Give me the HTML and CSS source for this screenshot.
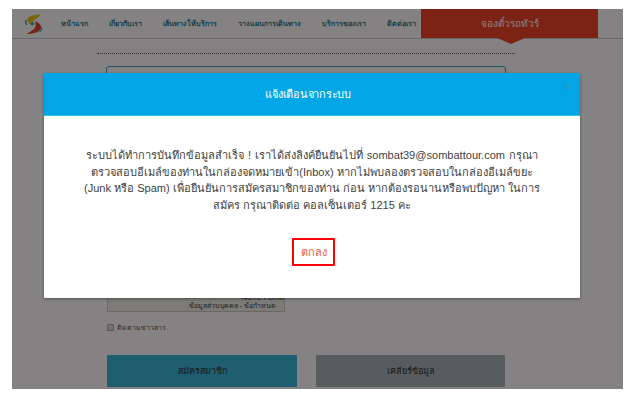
FILE: index.html
```html
<!DOCTYPE html>
<html lang="th">
<head>
  <meta charset="UTF-8" />
  <title>สมัครสมาชิก | Sombat Tour</title>
  <link rel="stylesheet" href="styles.css">
</head>
<body>
  <div class="page">
    <header class="site-header">
      <svg class="logo" width="18" height="21" viewBox="0 0 18 21">
        <path d="M16 0 C9 1 2 2 2 6 C2 9 6 10 8 13 C8 10 7 8 9 6 C11 5 14 3 16 0Z" fill="#e8cb1e"/>
        <path d="M2 20 C8 20 16 18 16 13 C16 10 12 8 10 7 C11 10 11 13 9 15 C7 17 4 18 2 20Z" fill="#d9472b"/>
        <circle cx="7.5" cy="9.5" r="1.6" fill="#2a9fd0"/>
        <path d="M1 6 Q0 9 2 11 M16.5 13 Q17 16 14.5 18" stroke="#2a9fd0" stroke-width="1.3" fill="none"/>
      </svg>
      <nav class="nav-links">
        <a class="nav-link">หน้าแรก</a>
        <a class="nav-link">เกี่ยวกับเรา</a>
        <a class="nav-link">เส้นทางให้บริการ</a>
        <a class="nav-link">วางแผนการเดินทาง</a>
        <a class="nav-link">บริการของเรา</a>
        <a class="nav-link">ติดต่อเรา</a>
      </nav>
      <a class="book-tab">จองตั๋วรถทัวร์</a>
    </header>

    <main class="form-area">
      <div class="dash-line"></div>
      <div class="input-box"></div>
      <div class="terms-box">
        <span class="terms-top">NOTE FORM</span>
        <span>ข้อมูลส่วนบุคคล - ข้อกำหนด</span>
      </div>
      <label class="news-check"><span class="check"></span>ติดตามข่าวสาร</label>
      <div class="form-buttons">
        <button class="btn btn-submit">สมัครสมาชิก</button>
        <button class="btn btn-clear">เคลียร์ข้อมูล</button>
      </div>
    </main>

    <div class="overlay"></div>
    <section class="modal">
      <div class="modal-header">
        <h2 class="modal-title">แจ้งเตือนจากระบบ</h2>
        <span class="modal-close">×</span>
      </div>
      <div class="modal-body">
        <p class="modal-text"><span class="first-line">ระบบได้ทำการบันทึกข้อมูลสำเร็จ ! เราได้ส่งลิงค์ยืนยันไปที่ sombat39@sombattour.com กรุณา</span><br>ตรวจสอบอีเมล์ของท่านในกล่องจดหมายเข้า(Inbox) หากไม่พบลองตรวจสอบในกล่องอีเมล์ขยะ<br>(Junk หรือ Spam) เพื่อยืนยันการสมัครสมาชิกของท่าน ก่อน หากต้องรอนานหรือพบปัญหา ในการ<br>สมัคร กรุณาติดต่อ คอลเซ็นเตอร์ 1215 คะ</p>
        <button class="ok-btn">ตกลง</button>
      </div>
    </section>
  </div>
</body>
</html>
```

FILE: styles.css
```css
* { box-sizing: border-box; margin: 0; padding: 0; }
body {
  background: #fff; margin: 9px 11px 11px 12px;
  font-family: 'Liberation Sans', 'DejaVu Sans', sans-serif;
}
.page {
  position: relative; height: 380px; overflow: hidden;
  background: #fff;
}
.site-header {
  display: flex; align-items: stretch; height: 30px;
  border-bottom: 1px solid #ccc; background: #fff;
  padding-left: 13px;
}
.logo { margin-top: 5px; flex: none; }
.nav-links {
  display: flex; gap: 21px; margin-left: 18px; width: 360px;
  white-space: nowrap;
}
.nav-link {
  color: #2b7f95; font-size: 7.2px; font-weight: 700; line-height: 30px;
}
.book-tab {
  position: relative; width: 177px; height: 29px;
  background: #f0462a; color: #fff; font-size: 10px;
  line-height: 29px; text-align: center;
}
.book-tab::after {
  content: ""; position: absolute; left: 76px; top: 29px;
  border: 14px solid transparent; border-top: 6px solid #f0462a; border-bottom: 0;
}
.form-area { padding: 14px 108px 0 85px; }
.dash-line { border-top: 1px dotted #555; }
.input-box {
  margin: 12px 9px 0; height: 40px;
  border: 1px solid #3ba4c4; border-radius: 3px;
}
.terms-box {
  margin: 166px 0 0 10px; width: 178px; height: 40px;
  background: #eef2ea; border: 1px solid #ccc;
  display: flex; flex-direction: column; align-items: flex-end; justify-content: flex-end;
  padding: 0 8px 1px 0;
  color: #444; font-size: 7px; line-height: 9px;
}
.terms-top { margin: 0 -8px -1px 0; }
.news-check {
  display: flex; align-items: center; gap: 3px; margin: 10px 0 0 10px;
  color: #555; font-size: 7px;
}
.check {
  width: 7px; height: 7px; background: #ddd;
  border: 1px solid #aaa; border-radius: 1px;
}
.form-buttons { display: flex; gap: 19px; margin: 22px 0 0 10px; }
.btn {
  width: 190px; height: 32px; border: 0; border-radius: 1px;
  font-family: inherit; font-size: 9px; color: #333;
}
.btn-submit { background: #36b8da; }
.btn-clear { background: #a6b4b8; width: 189px; }
.overlay {
  position: absolute; top: 0; left: 0; right: 0; bottom: 0;
  background: rgba(6, 0, 3, 0.49);
}
.modal {
  position: absolute; left: 32px; top: 64px; width: 536px; height: 225px;
  background: #fff; border-radius: 1px;
  box-shadow: 0 1px 3px rgba(0, 0, 0, 0.4);
}
.modal-header {
  position: relative; height: 43px; background: #00a6e6;
  border-bottom: 1px solid #35b8ec;
  padding-right: 8px;
}
.modal-title {
  color: #fff; font-size: 11px; font-weight: 400; letter-spacing: -0.25px;
  line-height: 43px; text-align: center;
}
.modal-close {
  position: absolute; right: 10px; top: 6px;
  color: #3a8fb5; font-size: 13px;
}
.modal-body { padding: 31px 12px 0; text-align: center; }
.modal-text { color: #3f3f3f; font-size: 11.05px; line-height: 16.7px; }
.first-line { word-spacing: 0.8px; }
.ok-btn {
  display: block; margin: 24px 0 0 236px; width: 43px; height: 28px;
  background: #fff; border: 2px solid #f00; border-radius: 1px;
  color: #f1593a; font-family: inherit; font-size: 11px;
}
```
